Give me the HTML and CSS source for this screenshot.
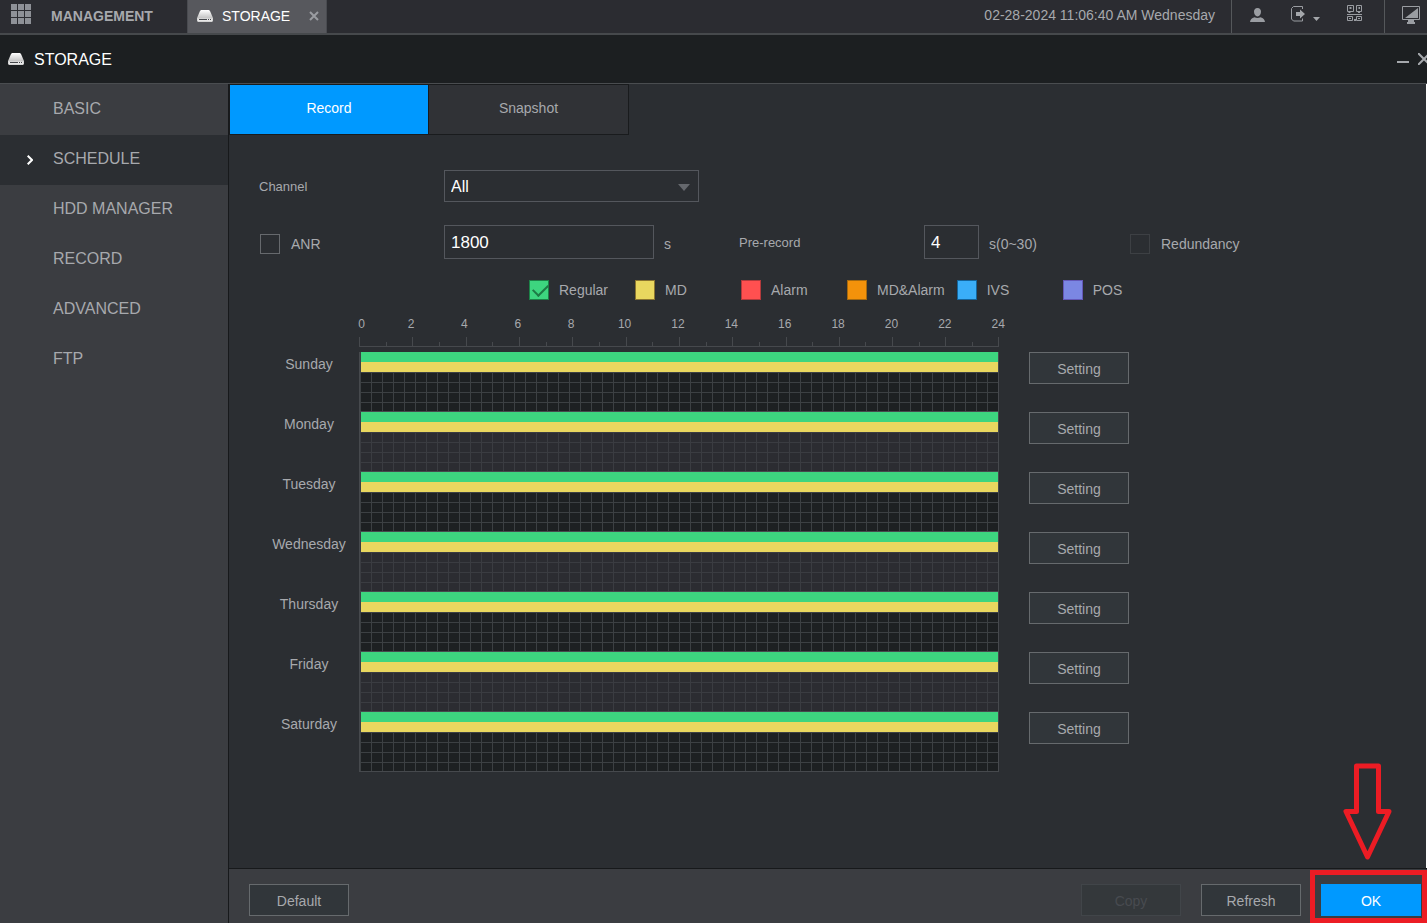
FILE: index.html
```html
<!DOCTYPE html>
<html lang="en">
<head>
    <meta charset="UTF-8">
    <meta name="viewport" content="width=device-width, initial-scale=1.0">
    <title>Storage - Schedule</title>
    <link rel="stylesheet" href="styles.css">
</head>
<body>
    <svg width="0" height="0" class="sprite" aria-hidden="true">
        <defs>
            <linearGradient id="disk-top" x1="0" y1="0" x2="0" y2="1">
                <stop offset="0" stop-color="#ffffff"/>
                <stop offset="1" stop-color="#c4c4c4"/>
            </linearGradient>
        </defs>
        <symbol id="disk" viewBox="0 0 16 12">
            <path d="M4 0H12L13 1L16 8H0L3 1Z" fill="url(#disk-top)"/>
            <path d="M0 8H16V11L15 12H1L0 11Z" fill="#d4d4d4"/>
            <path d="M1 9H15V11H1Z" fill="#e8e8e8"/>
            <path d="M2 9.500H10M11 9.500H12M13 9.500H14" stroke="#45474b"/>
        </symbol>
    </svg>

    <header class="topbar">
        <button class="apps" aria-label="Main menu">
            <svg width="20" height="20" viewBox="0 0 20 20" fill="#8e9197">
                <path d="M0 0h6v6H0zM7 0h6v6H7zM14 0h6v6h-6zM0 7h6v6H0zM7 7h6v6H7zM14 7h6v6h-6zM0 14h6v6H0zM7 14h6v6H7zM14 14h6v6h-6z"/>
            </svg>
        </button>
        <a href="#" class="management">MANAGEMENT</a>
        <div class="window-tab">
            <svg width="16" height="12"><use href="#disk"/></svg>
            <span>STORAGE</span>
            <button aria-label="Close tab">
                <svg width="10" height="10" viewBox="0 0 10 10" fill="none" stroke="#9a9ca1" stroke-width="2"><path d="M1 1L9 9M9 1L1 9"/></svg>
            </button>
        </div>
        <div class="clock">02-28-2024 11:06:40 AM Wednesday</div>
        <div class="user-tools">
            <button aria-label="User">
                <svg width="15" height="15" viewBox="0 0 15 15" fill="#9a9da2"><path d="M7.500 0C10 0 11 1.800 11 3.800C11 6.200 9.500 8.500 7.500 8.500C5.500 8.500 4 6.200 4 3.800C4 1.800 5 0 7.500 0ZM0 14C.5 11.500 1.500 10 4.500 9.200Q7.500 10.800 10.500 9.200C13.500 10 14.500 11.500 15 14Z"/></svg>
            </button>
            <button class="logout" aria-label="Logout">
                <svg width="30" height="16" viewBox="0 0 30 16">
                    <path d="M11.500 3V.5H2.500L.5 2.500V13L2.500 15H11.500V12.500" fill="none" stroke="#9a9da2"/>
                    <path d="M5 6H9V3.500L14 8L9 12.500V10H5ZM22 11H29L25.500 15Z" fill="#a4a7ab"/>
                </svg>
            </button>
            <button aria-label="QR code">
                <svg width="15" height="17" viewBox="0 0 15 17" fill="none" stroke="#9a9da2">
                    <path d="M.5 .5H6.500V6.500H.5ZM9.500 .5H14.500V6.500H9.500ZM.5 11.500H5.500V15.500H.5ZM9.500 11.500H14.500V15.500H9.500ZM0 9.500H15"/>
                    <path d="M2.500 3H4.500M11.500 3H13M1.500 7H3.500M11 7H13M7 15H9" stroke-width="2"/>
                    <path d="M2 13.500H4M11 13.500H13"/>
                </svg>
            </button>
        </div>
        <button class="display" aria-label="Display">
            <svg width="18" height="18" viewBox="0 0 18 18" fill="#9a9da2">
                <path d="M.5 .5H17.500V13.500H.5Z" fill="none" stroke="#9a9da2"/>
                <path d="M16 2V12H3ZM6 14H12V16H13V18H5V16H6Z"/>
            </svg>
        </button>
    </header>

    <div class="titlebar">
        <svg width="16" height="12"><use href="#disk"/></svg>
        <h1>STORAGE</h1>
        <div class="window-buttons">
            <button aria-label="Minimize"><svg width="12" height="12" viewBox="0 0 12 12"><path d="M0 9H12" stroke="#a5a8ac" stroke-width="2"/></svg></button>
            <button aria-label="Close"><svg width="9" height="12" viewBox="0 0 9 12"><path d="M0 0L12 12M12 0L0 12" stroke="#a5a8ac" stroke-width="2"/></svg></button>
        </div>
    </div>

    <div class="layout">
        <nav class="sidebar">
            <a href="#">BASIC</a>
            <a href="#" class="active">
                <svg width="6" height="10" viewBox="0 0 6 10" fill="none" stroke="#fff" stroke-width="2"><path d="M.7 .7L5 5L.7 9.300"/></svg>SCHEDULE</a>
            <a href="#">HDD MANAGER</a>
            <a href="#">RECORD</a>
            <a href="#">ADVANCED</a>
            <a href="#">FTP</a>
        </nav>

        <main class="content">
            <div class="tabs">
                <button class="active">Record</button>
                <button>Snapshot</button>
            </div>

            <form class="panel">
                <div class="form-row channel-row">
                    <label for="channel">Channel</label>
                    <div class="select">
                        <select id="channel"><option>All</option></select>
                        <svg width="12" height="7" viewBox="0 0 12 7"><path d="M0 0H12L6 7Z" fill="#65686d"/></svg>
                    </div>
                </div>
                <div class="form-row">
                    <label class="check"><input type="checkbox">ANR</label>
                    <div class="field">
                        <input id="anr-time" class="wide" type="text" value="1800" aria-label="ANR time">
                        <span>s</span>
                    </div>
                    <label for="prerecord">Pre-record</label>
                    <div class="field">
                        <input id="prerecord" class="short" type="text" value="4">
                        <span>s(0~30)</span>
                    </div>
                    <label class="check"><input type="checkbox" disabled>Redundancy</label>
                </div>

                <div class="legend">
                    <label><input type="checkbox" class="regular" checked>Regular</label>
                    <label><input type="checkbox" class="md">MD</label>
                    <label><input type="checkbox" class="alarm">Alarm</label>
                    <label><input type="checkbox" class="md-alarm">MD&amp;Alarm</label>
                    <label><input type="checkbox" class="ivs">IVS</label>
                    <label><input type="checkbox" class="pos">POS</label>
                </div>

                <div class="schedule">
                    <div class="hours">
                        <span>0</span><span>2</span><span>4</span><span>6</span><span>8</span><span>10</span><span>12</span><span>14</span><span>16</span><span>18</span><span>20</span><span>22</span><span>24</span>
                    </div>
                    <div class="ruler">
                        <i></i><i></i><i></i><i></i><i></i><i></i><i></i><i></i><i></i><i></i><i></i><i></i>
                        <i></i><i></i><i></i><i></i><i></i><i></i><i></i><i></i><i></i><i></i><i></i><i></i>
                    </div>
                    <div class="day"><span>Sunday</span><div class="track"><div class="bars"></div></div><button type="button" class="btn">Setting</button></div>
                    <div class="day"><span>Monday</span><div class="track"><div class="bars"></div></div><button type="button" class="btn">Setting</button></div>
                    <div class="day"><span>Tuesday</span><div class="track"><div class="bars"></div></div><button type="button" class="btn">Setting</button></div>
                    <div class="day"><span>Wednesday</span><div class="track"><div class="bars"></div></div><button type="button" class="btn">Setting</button></div>
                    <div class="day"><span>Thursday</span><div class="track"><div class="bars"></div></div><button type="button" class="btn">Setting</button></div>
                    <div class="day"><span>Friday</span><div class="track"><div class="bars"></div></div><button type="button" class="btn">Setting</button></div>
                    <div class="day"><span>Saturday</span><div class="track"><div class="bars"></div></div><button type="button" class="btn">Setting</button></div>
                </div>
            </form>

            <footer class="actions">
                <button class="btn default">Default</button>
                <button class="btn" disabled>Copy</button>
                <button class="btn">Refresh</button>
                <div class="ok-wrap">
                    <button class="btn primary">OK</button>
                    <div class="highlight"></div>
                    <svg class="arrow" width="50" height="98" viewBox="0 0 50 98" fill="none" stroke="#ec1c24" stroke-width="5" stroke-linejoin="round">
                        <path d="M14.500 3H36.500V48.500H47L25.500 94L4 48.500H14.500Z"/>
                    </svg>
                </div>
            </footer>
        </main>
    </div>
</body>
</html>
```
FILE: styles.css
```css
* {
    box-sizing: border-box;
}

html, body {
    height: 100%;
    margin: 0;
}

body {
    display: flex;
    flex-direction: column;
    overflow: hidden;
    background-color: #2b2e32;
    color: #a7a9ad;
    font: 14px/20px "Liberation Sans", Arial, sans-serif;
}

button, input, select {
    font-family: inherit;
    color: inherit;
}

button {
    padding: 0;
    border: none;
    background: none;
    font-size: 14px;
    cursor: pointer;
}

a {
    color: inherit;
    text-decoration: none;
}

svg {
    display: block;
    flex: none;
}

.sprite {
    position: absolute;
}

/* top bar */
.topbar {
    display: flex;
    flex: none;
    height: 35px;
    border-bottom: 2px solid #46494c;
    background-color: #2b2c31;
}

.apps {
    align-self: flex-start;
    padding: 4px 20px 0 11px;
}

.management {
    width: 136px;
    padding-top: 6px;
    font-weight: bold;
}

.window-tab {
    display: flex;
    align-items: center;
    width: 140px;
    padding: 0 7px 1px 9px;
    border: solid #494b50;
    border-width: 0 1px;
    background-color: #57585d;
    color: #fff;
}

.window-tab span {
    flex: 1;
    padding-left: 9px;
}

.clock {
    margin-left: auto;
    padding: 5px 16px 0 0;
}

.user-tools {
    display: flex;
    align-items: flex-start;
    gap: 26px;
    width: 153px;
    padding: 5px 0 0 18px;
    border-left: 1px solid #55585b;
}

.user-tools button:first-child {
    padding-top: 3px;
}

.user-tools .logout {
    padding-top: 1px;
}

.display {
    align-self: stretch;
    padding: 0 7px 3px 17px;
    border-left: 1px solid #55585b;
}

/* window title */
.titlebar {
    display: flex;
    flex: none;
    align-items: center;
    height: 49px;
    padding-left: 8px;
    border-bottom: 1px solid #4a4d50;
    background-color: #1c1f21;
}

.titlebar h1 {
    margin: 0;
    padding: 2px 0 0 10px;
    color: #fff;
    font-size: 16px;
    font-weight: normal;
}

.window-buttons {
    display: flex;
    gap: 9px;
    margin-left: auto;
}

.layout {
    display: flex;
    flex: 1;
    min-height: 0;
}

/* side menu */
.sidebar {
    width: 229px;
    flex: none;
    padding-top: 1px;
    border-right: 1px solid #17191b;
    background-color: #3b3d41;
    font-size: 16px;
}

.sidebar a {
    display: flex;
    align-items: center;
    height: 50px;
    padding: 0 0 2px 53px;
}

.sidebar .active {
    padding-left: 27px;
    background-color: #2b2e32;
}

.sidebar svg {
    margin: 2px 20px 0 0;
}

/* content */
.content {
    display: flex;
    flex: 1;
    flex-direction: column;
    min-width: 0;
}

.tabs {
    display: flex;
    height: 51px;
    flex: none;
    border-right: 1px solid #fff;
}

.tabs button {
    width: 200px;
    padding-bottom: 4px;
    border: 1px solid #191b1d;
    border-left: none;
    background-color: #303236;
}

.tabs .active {
    border-left: 1px solid #191b1d;
    background-color: #0099ff;
    color: #fff;
}

.panel {
    flex: 1;
    min-height: 0;
    padding: 35px 0 0 30px;
    border-right: 1px solid #fff;
}

.form-row {
    display: grid;
    grid-template-columns: 185px 295px 185px 205px auto;
    align-items: center;
    height: 34px;
    font-size: 13px;
}

.form-row label {
    padding-top: 2px;
}

.channel-row {
    height: 32px;
    margin-bottom: 23px;
}

.select {
    display: grid;
    align-items: center;
    width: 255px;
}

.select select,
.select svg {
    grid-area: 1 / 1;
}

.select select {
    height: 32px;
    padding: 0 6px;
    border: 1px solid #54575d;
    border-radius: 0;
    appearance: none;
    background: none;
    color: #fff;
    font-size: 16px;
}

.select svg {
    justify-self: end;
    margin: 2px 9px 0 0;
    pointer-events: none;
}

.field {
    display: flex;
    align-items: center;
    gap: 10px;
    font-size: 14px;
}

.field span {
    padding-top: 4px;
}

.field input {
    height: 34px;
    padding: 2px 6px 0;
    border: 1px solid #54575d;
    background: none;
    color: #fff;
    font-size: 17px;
}

.field .wide {
    width: 210px;
}

.field .short {
    width: 55px;
}

.form-row .check {
    display: flex;
    align-items: center;
    gap: 11px;
    padding: 4px 0 0 1px;
    font-size: 14px;
}

input[type="checkbox"] {
    width: 20px;
    height: 20px;
    margin: 0;
    border: 1px solid #66696d;
    appearance: none;
}

input[type="checkbox"]:disabled {
    border-color: #3d4044;
}

/* record types */
.legend {
    display: flex;
    padding: 21px 0 0 270px;
}

.legend label {
    display: flex;
    align-items: center;
    gap: 10px;
    min-width: 106px;
    padding-right: 12px;
}

.legend .regular {
    border-color: #1c8147;
    background-color: #3dd57f;
}

/* tick inside the checked type */
.legend .regular:checked::before {
    content: "";
    display: block;
    width: 13px;
    height: 7px;
    margin: 3px 0 0 3px;
    border: solid #1d7a45;
    border-width: 0 0 2px 2px;
    transform: rotate(-45deg);
}

.legend .md {
    border-color: #8a7430;
    background-color: #e9d75f;
}

.legend .alarm {
    border-color: #b23a3c;
    background-color: #ff5050;
}

.legend .md-alarm {
    border-color: #a5690f;
    background-color: #f3920b;
}

.legend .ivs {
    border-color: #15659c;
    background-color: #3aaef8;
}

.legend .pos {
    border-color: #6458b8;
    background-color: #7b87e3;
}

/* week schedule */
.schedule {
    padding-top: 14px;
}

.hours {
    display: flex;
    width: 694px;
    margin-left: 72px;
    font-size: 12px;
}

.hours span {
    flex: none;
    width: calc(100% / 13);
    text-align: center;
}

.hours span:first-child {
    padding-left: 8px;
}

.ruler {
    display: flex;
    align-items: flex-end;
    width: 640px;
    height: 11px;
    margin: 2px 0 5px 100px;
    border-bottom: 1px solid #46494d;
}

.ruler i {
    width: calc(100% / 24);
    height: 4px;
    border-left: 1px solid #46494d;
}

.ruler i:nth-child(odd) {
    height: 9px;
}

/* closing tick at 24, next to the short one at 23 */
.ruler i:last-child {
    height: 9px;
    border: none;
    background:
        linear-gradient(#46494d, #46494d) right top / 1px 9px no-repeat,
        linear-gradient(#46494d, #46494d) left bottom / 1px 4px no-repeat;
}

.day {
    display: flex;
    height: 60px;
}

.day span {
    width: 100px;
    padding-top: 2px;
    text-align: center;
}

.track {
    width: 640px;
    margin-right: 30px;
    padding-left: 1px;
    border: 1px solid #46494d;
    border-top: none;
    background:
        linear-gradient(to left, #3c4043 1px, transparent 1px) 1px 0 / 11px 100%,
        linear-gradient(#3c4043 1px, transparent 1px) 0 0 / 100% 10px,
        #1d2022;
}

.day:nth-child(even) .track {
    background:
        linear-gradient(to left, #3a3c41 1px, transparent 1px) 1px 0 / 11px 100%,
        linear-gradient(#3a3c41 1px, transparent 1px) 0 0 / 100% 10px,
        #2b2c31;
}

.bars {
    height: 20px;
    background: linear-gradient(#3dd57f 50%, #e9d75f 50%);
}

.btn {
    width: 100px;
    height: 32px;
    padding-top: 2px;
    border: 1px solid #666a6d;
    background-color: #31363a;
}

.btn:disabled {
    border-color: #414549;
    background-color: #34383b;
    color: #484b50;
}

/* bottom buttons */
.actions {
    display: flex;
    flex: none;
    gap: 20px;
    height: 55px;
    padding: 15px 6px 0 20px;
    border-top: 1px solid #17191b;
    background-color: #3b3d41;
}

.default {
    margin-right: auto;
}

.primary {
    border-color: #0099ff;
    background-color: #0099ff;
    color: #fff;
}

/* red callout drawn over the OK button */
.ok-wrap {
    position: relative;
}

.highlight {
    position: absolute;
    top: -14px;
    left: -11px;
    width: 117px;
    height: 53px;
    border: 5px solid #ec1c24;
    pointer-events: none;
}

.arrow {
    position: absolute;
    bottom: 62px;
    left: 21px;
    pointer-events: none;
}
```
